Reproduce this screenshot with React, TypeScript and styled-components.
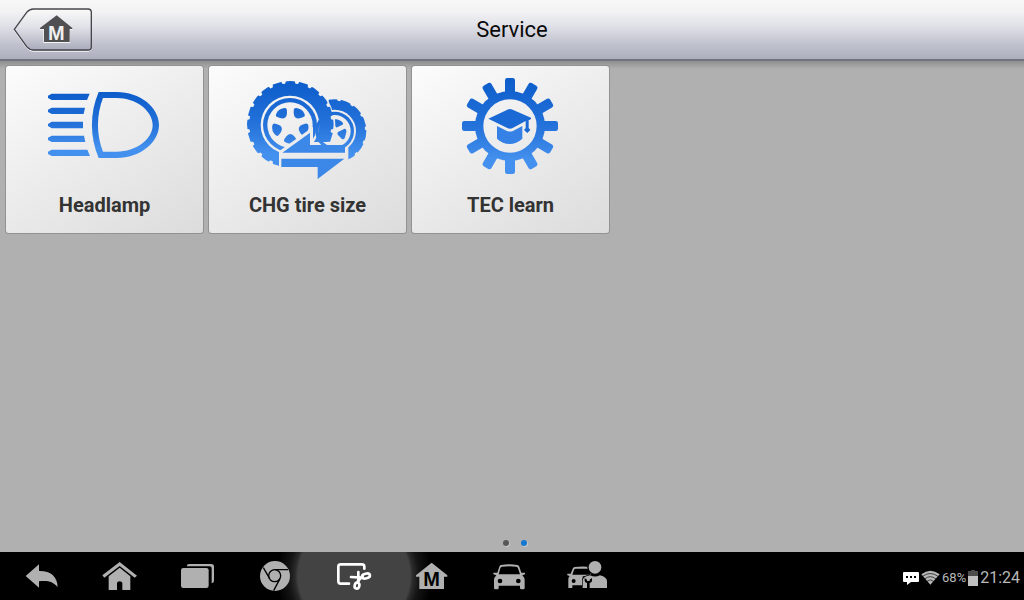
import React from "react";
import styled, { createGlobalStyle, css } from "styled-components";

const GlobalStyle = createGlobalStyle`
  * { box-sizing: border-box; }
  body {
    margin: 0;
    background: #b0b0b0;
    font-family: Roboto, "Liberation Sans", sans-serif;
  }
  button { font: inherit; color: inherit; border: 0; padding: 0; background: none; cursor: pointer; }
  svg { display: block; }
`;

const Page = styled.div`
  display: flex;
  flex-direction: column;
  min-height: 100vh;
`;

const Header = styled.header`
  display: grid;
  grid-template-columns: 1fr auto 1fr;
  align-items: center;
  height: 61px;
  padding: 0 12px;
  background: linear-gradient(#f7f7f7 0%, #f3f3f4 18%, #e2e3e9 42%, #bfc1cd 76%, #adafbe 100%);
  border-bottom: 2px solid #70727e;
`;

const BackButton = styled.button`
  justify-self: start;
`;

const Title = styled.h1`
  margin: 0;
  font-size: 22px;
  line-height: 28px;
  font-weight: 400;
  color: #0a0a0a;
`;

const Main = styled.main`
  flex: 1;
  display: flex;
  flex-direction: column;
  justify-content: space-between;
  padding: 5px 6px 6px;
  background: linear-gradient(#8f8f8f, #b0b0b0 8px);
`;

const Tiles = styled.div`
  display: flex;
  flex-wrap: wrap;
  gap: 6px;
`;

const Tile = styled.button`
  display: flex;
  flex-direction: column;
  align-items: center;
  width: 197px;
  padding: 8px 0 14px;
  border-radius: 3px;
  background: linear-gradient(150deg, #fcfcfc 0%, #ededed 45%, #dcdcdc 100%);
  box-shadow: 0 0 0 1px #929292;
`;

const TileLabel = styled.span`
  margin-top: 9px;
  font-size: 20px;
  line-height: 28px;
  font-weight: 700;
  color: #333;
`;

const Dots = styled.div`
  display: flex;
  justify-content: center;
  gap: 12px;
  padding-left: 5px;
`;

const Dot = styled.button<{ $active?: boolean }>`
  width: 6px;
  height: 6px;
  border-radius: 50%;
  background: ${(p) => (p.$active ? "#1478d0" : "#585858")};
  box-shadow: 1px 1px 0 #c8c8c8;
`;

const Footer = styled.footer`
  display: flex;
  justify-content: space-between;
  align-items: center;
  height: 48px;
  padding: 0 4px 0 3px;
  background: #000;
  overflow: hidden;
`;

const Nav = styled.nav`
  display: flex;
`;

const NavButton = styled.button<{ $active?: boolean }>`
  position: relative;
  width: 78px;
  height: 48px;
  color: ${(p) => (p.$active ? "#fff" : "#b0b0b0")};
  svg { position: relative; z-index: 1; }
  ${(p) =>
    p.$active
      ? css`
          &::before {
            content: "";
            position: absolute;
            inset: -56px -41px;
            background: radial-gradient(circle, #434343 56px, #2a2a2a 59px, #141414 65px, transparent 78px);
          }
        `
      : css`
          z-index: 1;
        `}
`;

const Status = styled.div`
  display: flex;
  align-items: center;
  gap: 2px;
  margin-top: 3px;
  color: #b8b8b8;
`;

const Battery = styled.span`
  font-size: 13px;
  line-height: 20px;
`;

const Clock = styled.time`
  font-size: 16px;
  line-height: 20px;
`;

const Gradient = ({ id, from, to }: { id: string; from: number; to: number }) => (
  <defs>
    <linearGradient id={id} gradientUnits="userSpaceOnUse" x1="0" y1={from} x2="0" y2={to}>
      <stop offset="0" stopColor="#0c5cca" />
      <stop offset="0.5" stopColor="#2472da" />
      <stop offset="0.85" stopColor="#4490ee" />
      <stop offset="1" stopColor="#4490ee" />
    </linearGradient>
  </defs>
);

const HeadlampIcon = () => (
  <svg width="128" height="108" viewBox="123 42 384 324" aria-hidden="true">
    <Gradient id="lamp" from={96} to={294} />
    <g fill="url(#lamp)">
      <path d="M155 101H269L261 120H155L144 114V107Z" />
      <path d="M155 143H255L251 162H155L144 156V149Z" />
      <path d="M155 185H249V205H155L144 198V192Z" />
      <path d="M155 227H252L256 246H155L144 240V233Z" />
      <path d="M155 269H262L270 288H155L144 282V275Z" />
      <path
        fillRule="evenodd"
        d="M296 96H350C420 96 477 142 477 195S420 294 350 294H296C269 232 269 158 296 96ZM309 114C289 166 289 224 309 275H350C408 275 458 238 458 195S408 114 350 114Z"
      />
    </g>
  </svg>
);

const treads = (n: number) => Array.from({ length: n }, (_, i) => (i * 360) / n);

const TireIcon = () => (
  <svg width="128" height="108" viewBox="117 42 384 324" aria-hidden="true">
    <Gradient id="tire" from={66} to={320} />
    <defs>
      <mask id="rear-cut" maskUnits="userSpaceOnUse" x="100" y="30" width="420" height="350">
        <rect x="100" y="30" width="420" height="350" fill="#fff" />
        <circle cx="255" cy="193" r="134" fill="#000" />
        <path d="M222 274L322 200V246H430V370H222Z" fill="#000" />
        <path d="M340 60H371V140H340Z" fill="#000" />
        {treads(14).map((a) => (
          <path key={a} d="M380 110H398L393 122H385Z" fill="#000" transform={`rotate(${a + 8} 389 213)`} />
        ))}
        <circle cx="389" cy="213" r="64" fill="#000" />
        <circle cx="389" cy="213" r="58" fill="#fff" />
        <circle cx="389" cy="213" r="48" fill="#000" />
        <path d="M390 178Q403 177 414 189Q416 193 411 195L397 202Q392 203 391 198Z" fill="#fff" />
        <path d="M399 216L419 206Q425 207 424 217L419 235Q415 240 410 236L398 224Q396 219 399 216Z" fill="#fff" />
      </mask>
      <mask id="front-cut" maskUnits="userSpaceOnUse" x="100" y="30" width="420" height="350">
        <rect x="100" y="30" width="420" height="350" fill="#fff" />
        {treads(20).map((a) => (
          <path key={a} d="M247 58H265L260 70H252Z" fill="#000" transform={`rotate(${a + 9} 256 193)`} />
        ))}
        <circle cx="255" cy="195" r="88" fill="#000" />
        <circle cx="255" cy="195" r="81" fill="#fff" />
        <circle cx="255" cy="195" r="68" fill="#000" />
        {treads(5).map((a) => (
          <path
            key={a}
            d="M256 222Q263 222 269 230L275 239Q276 244 271 247Q256 255 241 247Q236 244 237 239L243 230Q249 222 256 222Z"
            fill="#fff"
            transform={`rotate(${a} 256 195)`}
          />
        ))}
        <path d="M222 274L308 212L318 196V200L324 202V246H430V370H222Z" fill="#000" />
      </mask>
    </defs>
    <g mask="url(#rear-cut)">
      <circle cx="389" cy="213" r="95" fill="url(#tire)" />
    </g>
    <g mask="url(#front-cut)">
      <circle cx="256" cy="193" r="130" fill="url(#tire)" />
    </g>
    <path d="M232 278L315 218V255H420V278Z" fill="#3c88e8" />
    <path d="M229 296H418L338 357V321H229Z" fill="#3c88e8" />
  </svg>
);

const LearnIcon = () => (
  <svg width="128" height="108" viewBox="126 42 384 324" aria-hidden="true">
    <Gradient id="gear" from={54} to={342} />
    <defs>
      <mask id="gear-shape" maskUnits="userSpaceOnUse" x="165" y="47" width="300" height="300">
        {treads(12).map((a) => (
          <rect key={a} x="300" y="54" width="30" height="60" rx="7" fill="#fff" transform={`rotate(${a} 315 198)`} />
        ))}
        <circle cx="315" cy="198" r="105" fill="#fff" />
        <circle cx="315" cy="198" r="80" fill="#000" />
      </mask>
    </defs>
    <rect x="165" y="47" width="300" height="300" fill="url(#gear)" mask="url(#gear-shape)" />
    <path
      d="M250 176L307 149Q315 145 323 149L378 173V177L371 181V204L376 210L367 219L357 210L362 204V183L323 204Q315 209 307 204Z"
      fill="#1a69d5"
    />
    <path d="M276 198L306 213Q315 216 324 213L352 198V236Q334 252 314 252Q293 252 276 236Z" fill="#3581e6" />
  </svg>
);

const HouseLetter = styled.text`
  font-family: "Liberation Sans", sans-serif;
  font-size: 60px;
  font-weight: 700;
  text-anchor: middle;
`;

const BackIcon = () => (
  <svg width="82" height="46" viewBox="36 18 246 138" aria-hidden="true">
    <defs>
      <linearGradient id="back-fill" x1="0" y1="0" x2="0" y2="1">
        <stop offset="0" stopColor="#fafafa" />
        <stop offset="0.45" stopColor="#e0e1e7" />
        <stop offset="1" stopColor="#a9abbb" />
      </linearGradient>
    </defs>
    <path
      d="M43 89L80 38Q89 28 100 28H264Q274 28 274 38V141Q274 151 264 151H100Q89 151 80 141Z"
      fill="none"
      stroke="#f2f2f5"
      strokeWidth="3"
    />
    <path
      d="M43 85L80 34Q89 24 100 24H264Q274 24 274 34V137Q274 147 264 147H100Q89 147 80 137Z"
      fill="url(#back-fill)"
      stroke="#45464c"
      strokeWidth="4"
    />
    <path d="M120 84L170 46L218 84V87H210V126H130V87H120Z" fill="#f5f5f5" />
    <path d="M120 81L170 43L217 81V84H209V123H132V84H120Z" fill="#505052" />
    <HouseLetter x="169" y="117" fill="#efefef">M</HouseLetter>
  </svg>
);

const navItems: { label: string; box: string; active?: boolean; art: React.ReactNode }[] = [
  {
    label: "Back",
    box: "9 21 234 144",
    art: <path fill="currentColor" d="M77 93L117 58V78C151 77 172 94 173 126C158 109 143 106 117 109V128Z" />,
  },
  {
    label: "Home",
    box: "243 21 234 144",
    art: (
      <g fill="currentColor">
        <path d="M359 51L411 92L404 98L359 63L313 98L307 91Z" />
        <path d="M359 68L391 94V135H367V114Q366 109 359 109Q352 109 351 114V135H326V94Z" />
      </g>
    ),
  },
  {
    label: "Recent apps",
    box: "477 21 234 144",
    art: (
      <g fill="currentColor">
        <rect x="543" y="69" width="83" height="60" rx="7" />
        <path d="M560 64Q561 57 567 57H634Q642 57 642 65V107Q642 113 635 115V70Q635 64 629 64Z" />
      </g>
    ),
  },
  {
    label: "Browser",
    box: "51 21 234 144",
    art: (
      <g>
        <circle cx="165" cy="93" r="45" fill="currentColor" />
        <circle cx="164" cy="92" r="18" fill="none" stroke="#000" strokeWidth="4" />
        <path d="M164 74H204M149 101L130 68M180 101L161 137" fill="none" stroke="#000" strokeWidth="4" />
      </g>
    ),
  },
  {
    label: "Screenshot",
    box: "285 21 234 144",
    active: true,
    art: (
      <g fill="none" stroke="currentColor" strokeWidth="8" strokeLinecap="round" strokeLinejoin="round">
        <path d="M387 116H362Q355 116 355 109V65Q355 58 362 58H426Q433 58 433 65V71" />
        <path d="M393 96L425 98M415 81V111" />
        <ellipse cx="438" cy="93" rx="12" ry="7" transform="rotate(-14 438 93)" />
        <ellipse cx="411" cy="122" rx="7" ry="9" transform="rotate(14 411 122)" />
        <path d="M413 109L428 94" />
      </g>
    ),
  },
  {
    label: "MaxiSys home",
    box: "-21 21 234 144",
    art: (
      <g>
        <path fill="currentColor" d="M95 53L142 91V95H132V132H58V95H48V91Z" />
        <HouseLetter x="95" y="124" fill="#000">M</HouseLetter>
      </g>
    ),
  },
  {
    label: "Vehicle",
    box: "213 21 234 144",
    art: (
      <path
        fill="currentColor"
        fillRule="evenodd"
        d="M303 60Q328 56 352 60Q356 61 358 65L364 83H375V88L367 91Q374 98 374 105V129Q374 133 370 133H364Q360 133 360 129V122H296V129Q296 133 292 133H286Q282 133 282 129V105Q282 98 289 91L280 88V83H292L298 65Q299 61 303 60ZM306 65Q302 66 301 70L296 88H360L354 70Q353 66 349 65Q328 62 306 65ZM300 101A7 7 0 1 0 300 115A7 7 0 1 0 300 101ZM355 101A7 7 0 1 0 355 115A7 7 0 1 0 355 101Z"
      />
    ),
  },
  {
    label: "Remote support",
    box: "447 21 234 144",
    art: (
      <g>
        <path
          fill="currentColor"
          fillRule="evenodd"
          d="M524 66Q547 63 572 66V94H548V121H517V129H505V103Q505 97 509 93L502 91V86H512L518 71Q520 67 524 66ZM526 71Q523 72 522 75L517 89H570V71ZM521 102A6 6 0 1 0 521 114A6 6 0 1 0 521 102Z"
        />
        <path d="M584 88Q551 88 546 103V133H624V105Q616 88 584 88Z" fill="#000" />
        <circle cx="585" cy="67" r="23" fill="#000" />
        <circle cx="585" cy="67" r="19" fill="currentColor" />
        <path d="M548 129V105Q550 95 570 91Q585 98 600 91Q621 97 621 108V129Z" fill="currentColor" />
        <path d="M554 99V108Q555 112 561 114V129H569V114Q575 112 576 108V99L569 104V108H561V104Z" fill="#000" />
      </g>
    ),
  },
];

const tiles = [
  { label: "Headlamp", Icon: HeadlampIcon },
  { label: "CHG tire size", Icon: TireIcon },
  { label: "TEC learn", Icon: LearnIcon },
];

export default function App() {
  return (
    <Page>
      <GlobalStyle />
      <Header>
        <BackButton aria-label="Back to home">
          <BackIcon />
        </BackButton>
        <Title>Service</Title>
      </Header>
      <Main>
        <Tiles>
          {tiles.map(({ label, Icon }) => (
            <Tile key={label}>
              <Icon />
              <TileLabel>{label}</TileLabel>
            </Tile>
          ))}
        </Tiles>
        <Dots>
          <Dot aria-label="Page 1" />
          <Dot aria-label="Page 2" $active />
        </Dots>
      </Main>
      <Footer>
        <Nav>
          {navItems.map((n) => (
            <NavButton key={n.label} aria-label={n.label} $active={n.active}>
              <svg width="78" height="48" viewBox={n.box} aria-hidden="true">
                {n.art}
              </svg>
            </NavButton>
          ))}
        </Nav>
        <Status>
          <svg width="16" height="14" viewBox="0 0 16 14" aria-hidden="true">
            <path d="M1 1H15Q16 1 16 2V10Q16 11 15 11H8L4 14V11H1Q0 11 0 10V2Q0 1 1 1Z" fill="#fff" />
            <path d="M3 5H5V7H3ZM7 5H9V7H7ZM11 5H13V7H11Z" fill="#000" />
          </svg>
          <svg width="19" height="16" viewBox="0 0 57 48" aria-hidden="true">
            <path d="M28 44L1 13Q28 -8 56 13Z" fill="currentColor" />
            <path d="M5 19Q28 2 51 19M11 27Q28 13 45 27M18 34Q28 25 38 34" fill="none" stroke="#000" strokeWidth="2" />
          </svg>
          <Battery>68%</Battery>
          <svg width="10" height="16" viewBox="0 0 10 16" aria-hidden="true">
            <path d="M3 0H7V1H10V16H0V1H3Z" fill="#4c4c4c" />
            <path d="M0 6H10V16H0Z" fill="#c0c0c0" />
          </svg>
          <Clock>21:24</Clock>
        </Status>
      </Footer>
    </Page>
  );
}
